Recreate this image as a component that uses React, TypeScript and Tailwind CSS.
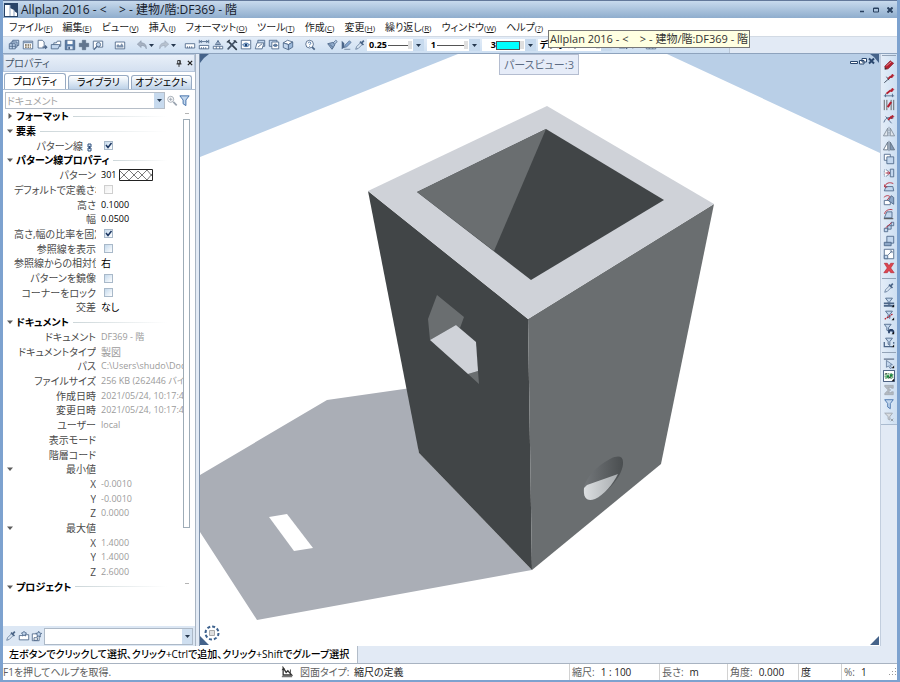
// src/App.tsx
import type { ReactNode } from "react";

const NAVY = "#4c6688";
const PALE = "#c3d7ee";
const RED = "#b5202f";

const redPencil = <path d="M8.5 5.5 11 2.500l1.500 1.500-2.500 3z" fill={RED} stroke={RED} />;
const funnel = <path d="M3 2.500h8L8 6.500V11L6 9.500v-3z" fill={PALE} stroke={NAVY} />;
const corner = <path d="M10 13h3v-3z" fill="#111" />;

// every drawing sits on a 14 x 14 grid
const icons: Record<string, ReactNode> = {
  project: (
    <g stroke={NAVY} fill={PALE}>
      <path d="M5.500 1.500h7v6h-7z" />
      <path d="M3.500 3.500h7v6h-7z" />
      <path d="M1.500 5.500h7v6h-7zM1.500 8.500h7M5 5.500v6" />
    </g>
  ),
  layout: (
    <g>
      <path d="M1.500 2.500h11v9h-11z" fill="#fff" stroke={NAVY} />
      <path d="M2 3h10v2H2z" fill="#8097b5" />
      <path d="M3.500 7h7M3.500 9.500h7" stroke="#6f6045" strokeWidth="1.500" strokeDasharray="2 1" />
    </g>
  ),
  newFile: (
    <g stroke={NAVY} fill="#fff">
      <path d="M2.500 1.500h5l2 2v7h-7z" />
      <path d="M7.500 9.500h5M10.500 7.500l2 2-2 2" fill="none" strokeWidth="1.500" />
    </g>
  ),
  open: (
    <g stroke={NAVY} fill={PALE}>
      <path d="M4.500 4.500h3l1-2h4v6h-8z" fill="#fff" />
      <path d="M1.500 6.500h8l2 0-2 5h-8z" />
    </g>
  ),
  save: (
    <g>
      <path d="M1.500 1.500h11v11h-11z" fill="#5b7da8" stroke={NAVY} />
      <path d="M4 2h6v4H4z" fill="#fff" />
      <path d="M4 8.500h6V12H4z" fill="#dce7f4" />
      <path d="M5 9h2v3H5z" fill={NAVY} />
    </g>
  ),
  plus: <path d="M5 1.500h4V5h3.500v4H9v3.500H5V9H1.500V5H5z" fill="#62758e" stroke="#52647b" strokeWidth=".6" />,
  preview: (
    <g stroke={NAVY} fill="#fff">
      <path d="M1.500 11.500v-9h11v7h-6" />
      <circle cx="7.500" cy="6.500" r="2.500" fill={PALE} />
      <path d="m6 8.500-4 4" strokeWidth="1.500" />
    </g>
  ),
  picture: (
    <g>
      <path d="M1.500 3.500h11v8h-11z" fill="#fff" stroke={NAVY} />
      <path d="M3 10V7l2-1 2 2 2-3 2 3v2z" fill="#7b91ad" />
    </g>
  ),
  undo: <path d="M6 2 1.500 6 6 10V7.500c3 0 5 1 6 4 .5-4-1.500-7-6-7z" fill="#a7b2c1" stroke="#8290a3" strokeWidth=".6" />,
  redo: <path d="m8 2 4.500 4L8 10V7.500c-3 0-5 1-6 4-.5-4 1.500-7 6-7z" fill="#b8c2cf" stroke="#94a1b2" strokeWidth=".6" />,
  ruler: (
    <g stroke={NAVY} fill="#fff">
      <path d="M1.500 5.500h11v5h-11z" />
      <path d="M4 8.500v2M6.500 8.500v2M9 8.500v2" />
    </g>
  ),
  measure: (
    <g stroke={NAVY} fill="#fff">
      <path d="M1.500 7.500h11v4h-11zM4 9.500v2M6.500 9.500v2M9 9.500v2" />
      <path d="M1.500 1v4M12.500 1v4M2 3h10M4.500 1.500 2.500 3l2 1.500M9.500 1.500l2 1.500-2 1.500" />
    </g>
  ),
  balance: (
    <g stroke={NAVY} fill="#fff">
      <path d="M7 1.500v5M4 6.500h6M7 2 4 6.500M7 2l3 4.500" />
      <path d="M1.500 8.500h11v3h-11zM5 8.500v3M9 8.500v3" />
    </g>
  ),
  tools: (
    <g strokeLinecap="round">
      <path d="m3 3 9 9" stroke="#33404f" strokeWidth="2" />
      <path d="M11 2.500 2.500 11.500" stroke="#46566b" strokeWidth="2" />
      <path d="M1.500 3.500 4 1.500M9.500 2l3 2" stroke="#33404f" strokeWidth="1.500" />
    </g>
  ),
  eye: (
    <g>
      <path d="M1.500 1.500h11v10h-11z" fill="#fff" stroke={NAVY} />
      <path d="M3 7c2-3 6-3 8 0-2 2.500-6 2.500-8 0z" fill={PALE} stroke="#31629b" />
      <circle cx="7" cy="7" r="1.500" fill="#1f416e" />
    </g>
  ),
  layers: (
    <g stroke={NAVY} fill="#fff">
      <path d="M4.500 1.500h8v7h-8z" fill={PALE} />
      <path d="m1.500 11.500 2-7h8l-2 7z" />
      <path d="m4.500 9.500 5-4" />
    </g>
  ),
  layersEye: (
    <g stroke={NAVY} fill="#fff">
      <path d="M1.500 1.500h9v7h-9z" fill={PALE} />
      <path d="M4.500 3.500h8v8h-8z" />
      <path d="M6 7.500c1.500-2 4-2 5 0-1 1.500-3.500 1.500-5 0z" fill="#5b7da8" />
    </g>
  ),
  cube: (
    <g stroke={NAVY}>
      <path d="m1.500 4.500 5-3 6 2-5 3z" fill="#fff" />
      <path d="m1.500 4.500 6 2v6l-6-2.500z" fill={PALE} />
      <path d="m7.500 6.500 5-3v6l-5 3z" fill="#9dbadb" />
    </g>
  ),
  help: (
    <g stroke={NAVY} fill="#fff">
      <circle cx="6.500" cy="6" r="4.500" />
      <path d="m9.500 9.500 3 3" strokeWidth="2" />
      <path d="M5 5c0-2 3-2 3 0 0 1-1.500 1-1.500 2M6.500 8v1" fill="none" stroke="#31629b" />
    </g>
  ),
  brush: (
    <g stroke={NAVY}>
      <path d="m8 5 3.500-3.500L13 3 9.500 6.500z" fill={PALE} />
      <path d="M2 5.500 8 4l2.500 2.500L7 12z" fill="#8fa9c9" />
      <path d="m4 6 4.500 4" />
    </g>
  ),
  fillPencil: (
    <g>
      <path d="M2 2v10l3-2V5z" fill={NAVY} />
      <path d="m5 10 1-3 5-5 2 2-5 5z" fill="#86a6cf" stroke={NAVY} strokeWidth=".8" />
      <path d="M5 12h7" stroke="#6c7f99" />
    </g>
  ),
  dropper: (
    <g stroke={NAVY}>
      <path d="m2 12 1-3 5-5 2 2-5 5z" fill="#dbe7f4" strokeWidth=".8" />
      <path d="m7 3 4 4M9 4.500 11.500 2" strokeWidth="2" />
    </g>
  ),
  pencil: (
    <g>
      <path d="M2 8.500 8.500 2l4 3L6 11.500l-3 .5z" fill={RED} stroke="#7b1d28" strokeWidth=".7" />
      <path d="m4 8 6-5" stroke="#ea9a9f" />
      <path d="M2 12.500 2 9.500l2.500 2z" fill="#333" />
    </g>
  ),
  trim: (
    <g>
      {redPencil}
      <path d="m1.500 12.500 8-7M4 5.500l3 4" stroke="#2c3a4d" />
      <path d="m6 8 3-3" stroke={RED} strokeWidth="2" />
    </g>
  ),
  trimEnd: (
    <g>
      {redPencil}
      <path d="M1 11.500h12M3 9v4M11 9v4" stroke={NAVY} />
      <path d="m4 9 5-4" stroke={RED} strokeWidth="2" />
    </g>
  ),
  between: (
    <g>
      <path d="M1.500 1v12M4.500 1v12M9.500 1v12M12.500 1v12" stroke="#555" />
      <path d="m5.500 9.500 4-6" stroke={RED} strokeWidth="2.500" />
    </g>
  ),
  trimCurve: (
    <g>
      {redPencil}
      <path d="M1 11c2-5 4-7 11-5M3 4l7 8" stroke={NAVY} fill="none" />
      <path d="m6 8 4-4" stroke={RED} strokeWidth="2" />
    </g>
  ),
  mirrorCopy: (
    <g stroke="#7f8b99">
      <path d="M5.500 2.500v9h-5zM8.500 2.500v9h5z" fill="#dfe5ec" />
      <path d="M7 1v12" strokeDasharray="2 1" />
    </g>
  ),
  mirror: (
    <g stroke="#5d6d80">
      <path d="M5.500 2.500v9h-5z" fill="#fff" />
      <path d="M8.500 2.500v9h5z" fill="#8298b3" />
      <path d="M7 1v12" />
    </g>
  ),
  copy: (
    <g stroke={NAVY}>
      <path d="M1.500 1.500h7v7h-7z" fill="#fff" />
      <path d="M4.500 4.500h8v8h-8z" fill={PALE} />
    </g>
  ),
  move: (
    <g stroke={NAVY}>
      <path d="M1.500 3.500h4v7h-4z" fill="#fff" strokeDasharray="1 1" />
      <path d="M8.500 2.500h4v9h-4z" fill={PALE} />
      <path d="M3 7h5M6 5l2 2-2 2" stroke={RED} fill="none" />
    </g>
  ),
  rotate: (
    <g>
      <path d="M3.500 6.500h8l1 5h-11z" fill={PALE} stroke={NAVY} />
      <path d="M2 7C3 2 8 1 12 3M2 4v3h3" stroke={RED} fill="none" />
    </g>
  ),
  rotateCopy: (
    <g>
      <path d="M1.500 7.500h7v5h-7z" fill="#fff" stroke={NAVY} />
      <path d="m6.500 8 3-6 3 2v8z" fill="#8da7c7" stroke={NAVY} />
      <path d="M1 4c2-2 5-3 7-1L5 7" stroke={RED} fill="none" />
    </g>
  ),
  rotate3d: (
    <g>
      <path d="M4.500 4.500h6v7h-9z" fill={PALE} stroke={NAVY} />
      <path d="M2 7c0-4 5-6 9-5" stroke={RED} fill="none" />
      <path d="M1 12.500h11" stroke="#333" />
    </g>
  ),
  array: (
    <g stroke={NAVY} fill={PALE}>
      <path d="M1.500 8.500h4v4h-4zM5.500 5.500h4v4h-4zM9.500 1.500h3v4h-3z" />
      <path d="m3 8 7-6" stroke={RED} />
    </g>
  ),
  stack: (
    <g stroke={NAVY}>
      <path d="M4.500 1.500h8v8h-8z" fill={PALE} />
      <path d="M1.500 8.500h8v4h-8z" fill="#8da7c7" />
    </g>
  ),
  stretch: (
    <g>
      <path d="M1.500 1.500h11v11h-11z" fill="#fff" stroke={NAVY} />
      <path d="M1.500 8.500h4v4h-4z" fill={PALE} stroke={NAVY} />
      <path d="m6 8 4-4M8 3.500h2.500V6" stroke={NAVY} fill="none" />
    </g>
  ),
  remove: <path d="M1.500 1.500H5l2 3 2-3h3.500L9 7l4 5.500H9L7 9.500l-2 3H1L5 7z" fill="#dc4750" stroke="#b5202f" strokeWidth=".7" />,
  filterLine: (
    <g>
      {funnel}
      <path d="M1 8.500h12M1 11.500h12" stroke={NAVY} strokeWidth="2" />
      {corner}
    </g>
  ),
  filterRed: (
    <g>
      {funnel}
      <path d="m2 12 9-6" stroke={RED} strokeWidth="1.500" strokeDasharray="2 1" />
      {corner}
    </g>
  ),
  filterFind: (
    <g>
      <path d="M1.500 1.500h8l-3 4v4l-2-1v-3z" fill={PALE} stroke={NAVY} />
      <path d="M6 12V9l2-2h3l2 2v3h-2v-2H8v2z" fill="#253e66" />
      {corner}
    </g>
  ),
  filterBox: (
    <g>
      {funnel}
      <path d="M1.500 7v5.500h9M12.500 7v2" stroke={NAVY} strokeWidth="1.500" fill="none" />
      {corner}
    </g>
  ),
  pick: (
    <g>
      <path d="M1 2.500h12" stroke="#8392a8" strokeWidth="2" />
      <path d="m4 4 7 5-3 .5 2 3-1.500 1-2-3L4 12z" fill={PALE} stroke={NAVY} strokeWidth=".8" />
      {corner}
    </g>
  ),
  green: (
    <g>
      <path d="M.5.500h13v13H.5z" fill="#fff" stroke="#253e66" />
      <path d="M2.500 4.500h9v5h-9z" fill="#dff1dc" stroke="#27733c" strokeDasharray="2 1" />
      <path d="M4 6h3v3H4zM8 5h3v3H8z" fill="#16833a" />
      <path d="M7 8h2v1H7zM3 4h2v1H3z" fill="#111" />
      {corner}
    </g>
  ),
  sigma: <path d="M2 1.500h10V5h-2V4H6l3 3-3 3h4V9h2v3.500H2V11l4-4-4-4z" fill="#b3b9c0" stroke="#949ba4" strokeWidth=".6" />,
  funnel: <path d="M2 2h10L8.500 6.500v6l-3-2v-4z" fill={PALE} stroke="#3f6da8" />,
  funnelGray: (
    <g>
      <path d="M2 2.500h9L8 6.500v4l-2-1v-3z" fill="#d8dce0" stroke="#9da4ad" />
      <path d="m9 9 3 3M12 9l-3 3" stroke="#8f979f" />
    </g>
  ),
  zoom: (
    <g stroke="#9aa4b0" fill="#fff">
      <circle cx="5.500" cy="5" r="3.500" />
      <path d="m8.500 8 4 4" strokeWidth="2" />
      <path d="M3.500 5h4M5.500 3v4" />
    </g>
  ),
  favOpen: (
    <g stroke={NAVY} fill="#fff">
      <path d="M1.500 6.500h3l1-1h7v6h-11z" />
      <path d="m7 1.500 1 1.500 2 .5-1.500 1.500.5 2-2-1-2 1 .5-2L4 3.500 6 3z" fill={PALE} />
    </g>
  ),
  favSave: (
    <g stroke={NAVY} fill="#fff">
      <path d="M1.500 4.500h8v8h-8zM3.500 9h4v3h-4z" />
      <path d="m9 1.500 1 2 2.500.5-2 1.500.5 2.500-2-1-2 1 .5-2.500-2-1.500L8 3.500z" fill={PALE} />
    </g>
  ),
  drawingType: (
    <g stroke="#333" fill="none">
      <path d="M2.500 2v8.500h10L8 5.500l-2 2z" strokeWidth="1.500" />
      <path d="M1 4.500 4 3M11 4v4M1 12.500h12" />
    </g>
  ),
};

function Icon({ name, className = "size-[14px]" }: { name: string; className?: string }) {
  return (
    <svg viewBox="0 0 14 14" className={className} fill="none" aria-hidden="true">
      {icons[name]}
    </svg>
  );
}

function Caret() {
  return (
    <svg viewBox="0 0 5 3" className="h-[3px] w-[5px] shrink-0" aria-hidden="true">
      <path d="M0 0h5L2.500 3z" fill="#26384f" />
    </svg>
  );
}

const menus = [
  ["ファイル", "F"],
  ["編集", "E"],
  ["ビュー", "V"],
  ["挿入", "I"],
  ["フォーマット", "O"],
  ["ツール", "T"],
  ["作成", "C"],
  ["変更", "H"],
  ["繰り返し", "R"],
  ["ウィンドウ", "W"],
  ["ヘルプ", "?"],
];

interface Row {
  kind?: "section" | "sub" | "check";
  label: string;
  value?: string;
  checked?: boolean;
  closed?: boolean;
  disabled?: boolean;
  editable?: boolean;
}

const rows: Row[] = [
  { kind: "section", label: "フォーマット", closed: true },
  { kind: "section", label: "要素" },
  { kind: "check", label: "パターン線", checked: true },
  { kind: "section", label: "パターン線プロパティ" },
  { label: "パターン", value: "301", editable: true },
  { kind: "check", label: "デフォルトで定義され", disabled: true },
  { label: "高さ", value: "0.1000", editable: true },
  { label: "幅", value: "0.0500", editable: true },
  { kind: "check", label: "高さ,幅の比率を固定", checked: true },
  { kind: "check", label: "参照線を表示" },
  { label: "参照線からの相対位", value: "右", editable: true },
  { kind: "check", label: "パターンを鏡像" },
  { kind: "check", label: "コーナーをロック" },
  { label: "交差", value: "なし", editable: true },
  { kind: "section", label: "ドキュメント" },
  { label: "ドキュメント", value: "DF369 - 階" },
  { label: "ドキュメントタイプ", value: "製図" },
  { label: "パス", value: "C:\\Users\\shudo\\Documents" },
  { label: "ファイルサイズ", value: "256 KB (262446 バイト)" },
  { label: "作成日時", value: "2021/05/24, 10:17:44" },
  { label: "変更日時", value: "2021/05/24, 10:17:44" },
  { label: "ユーザー", value: "local" },
  { label: "表示モード" },
  { label: "階層コード" },
  { kind: "sub", label: "最小値" },
  { label: "X", value: "-0.0010" },
  { label: "Y", value: "-0.0010" },
  { label: "Z", value: "0.0000" },
  { kind: "sub", label: "最大値" },
  { label: "X", value: "1.4000" },
  { label: "Y", value: "1.4000" },
  { label: "Z", value: "2.6000" },
  { kind: "section", label: "プロジェクト" },
];

function Triangle({ closed }: { closed?: boolean }) {
  return (
    <svg viewBox="0 0 6 6" className="size-[6px] shrink-0" aria-hidden="true">
      <path d={closed ? "M1.500 0v6L5 3z" : "M0 1.500h6L3 5z"} fill="#5c5c5c" />
    </svg>
  );
}

function PropertyRow({ row, id }: { row: Row; id: string }) {
  if (row.kind === "section") {
    return (
      <div className="flex min-h-0 flex-1 items-center">
        <button type="button" className="flex items-center gap-[3px] font-bold text-black">
          <Triangle closed={row.closed} />
          {row.label}
        </button>
        <span className="mr-4 ml-1 h-px flex-1 bg-linear-to-r from-[#ccd6d9] to-white" />
      </div>
    );
  }

  // figures and paths are set one size below Japanese values
  const valueSize = /^[\x20-\x7e]/.test(row.value ?? "") ? "text-[9px]" : "text-[10px]";

  return (
    <div className="flex min-h-0 flex-1 items-center">
      <span className="w-[7px] shrink-0">{row.kind === "sub" && <Triangle />}</span>
      <label htmlFor={id} className="w-[82px] shrink-0 overflow-hidden text-right whitespace-nowrap text-[#4a4a4a]">
        {row.label}
        {row.label === "パターン線" && (
          <svg viewBox="0 0 5 9" className="mx-1 inline h-[9px] w-[5px]" aria-hidden="true">
            <path d="M1 1h3v3H1zM1 5h3v3H1zM2.500 3v3" fill="#dbe7f4" stroke="#31527f" />
          </svg>
        )}
      </label>
      <div className="ml-[5px] flex min-w-0 flex-1 items-center overflow-hidden">
        {row.kind === "check" && (
          <span className="ml-[3px] grid size-[9px] place-items-center">
            <input
              id={id}
              type="checkbox"
              defaultChecked={row.checked}
              disabled={row.disabled}
              className="peer col-start-1 row-start-1 size-[9px] appearance-none border border-[#a9b9c9] bg-linear-to-br from-[#c4d9ec] to-white disabled:border-[#cfcfcf] disabled:from-[#eeeeee]"
            />
            <svg viewBox="0 0 9 9" className="pointer-events-none col-start-1 row-start-1 hidden size-[9px] peer-checked:block" aria-hidden="true">
              <path d="m2 4 2 2.500L7.500 2" stroke="#1b3560" strokeWidth="1.500" fill="none" />
            </svg>
          </span>
        )}
        {row.kind !== "check" && row.editable && (
          <input
            id={id}
            type="text"
            defaultValue={row.value}
            className={`h-[14px] text-black ${valueSize} ${row.value === "301" ? "w-[18px]" : "w-full"}`}
          />
        )}
        {row.kind !== "check" && !row.editable && (
          <output id={id} className={`whitespace-nowrap text-[#9b9b9b] ${valueSize}`}>
            {row.value}
          </output>
        )}
        {row.value === "301" && (
          <svg viewBox="0 0 34 12" className="h-[12px] w-[34px] shrink-0" aria-hidden="true">
            <path d="M.5.5h33v11H.5z" fill="#fff" stroke="#222" />
            <path d="M1 2l9 9 9-9 9 9 5-6M1 10l9-9 9 9 9-9 5 6" fill="none" stroke="#555" strokeWidth=".8" />
          </svg>
        )}
      </div>
    </div>
  );
}

function PropertyPanel() {
  return (
    <aside className="flex w-[193px] shrink-0 flex-col border-r border-[#a8b4c2] bg-white">
      <header className="flex h-[18px] items-center border border-[#b5c5da] bg-linear-to-b from-[#e9f0f9] to-[#d4e0f0] pl-px text-[10px] text-[#465568]">
        <span className="flex-1">プロパティ</span>
        <button type="button" aria-label="固定" className="mr-1">
          <svg viewBox="0 0 7 8" className="h-[7px] w-[6px]" aria-hidden="true">
            <path d="M2 .5h3v4H2zM.5 4.500h6M3.500 5v3M4.500 1v3" fill="none" stroke="#222" />
          </svg>
        </button>
        <button type="button" aria-label="閉じる">
          <svg viewBox="0 0 7 7" className="mx-px size-[6px]" aria-hidden="true">
            <path d="m1 1 5 5M6 1 1 6" stroke="#222" strokeWidth="1.500" />
          </svg>
        </button>
      </header>
      <div role="tablist" className="flex h-[18px] items-end gap-[2px] border-b border-[#aebfd3] pl-px text-[10px] leading-[13px] text-black">
        <button role="tab" aria-selected="true" type="button" className="h-[16px] w-[62px] rounded-t-[3px] border border-b-0 border-[#98abc3] bg-white">
          プロパティ
        </button>
        <button role="tab" type="button" className="h-[14px] w-[61px] rounded-t-[3px] border border-b-0 border-[#98abc3] bg-linear-to-b from-white to-[#bdd2e8]">
          ライブラリ
        </button>
        <button role="tab" type="button" className="h-[14px] w-[61px] rounded-t-[3px] border border-b-0 border-[#98abc3] bg-linear-to-b from-white to-[#bdd2e8]">
          オブジェクト
        </button>
      </div>
      <div className="mt-[2px] flex h-[17px] shrink-0 items-center px-[2px]">
        <label className="flex h-full w-[160px] items-center border border-[#b6bec8]">
          <select aria-label="ドキュメント" className="h-full min-w-0 flex-1 appearance-none px-px text-[10px] leading-[14px] text-[#a5a5a5]">
            <option>ドキュメント</option>
          </select>
          <span className="grid h-full w-[10px] place-items-center bg-[#c7daee]">
            <Caret />
          </span>
        </label>
        <button type="button" aria-label="拡大" className="ml-px">
          <Icon name="zoom" className="size-[12px]" />
        </button>
        <button type="button" aria-label="フィルタ">
          <Icon name="funnel" className="size-[13px]" />
        </button>
      </div>
      <div className="flex min-h-0 flex-1">
        <div className="flex min-w-0 flex-1 flex-col overflow-hidden pb-8 pl-1 text-[10px] leading-[14px]">
          {rows.map((row, i) => (
            <PropertyRow key={i} row={row} id={`prop-${i}`} />
          ))}
        </div>
        <div className="mr-[5px] flex w-[7px] flex-col items-center pt-[4px] pb-[42px]">
          <span className="h-px w-[4px] bg-[#b4b4b4]" />
          <span className="mt-[5px] w-full flex-1 border border-[#9eacb7] bg-white" />
          <span className="mt-[55px] h-px w-[4px] bg-[#b4b4b4]" />
        </div>
      </div>
      <footer className="flex h-[20px] shrink-0 items-center gap-px bg-[#dce7f4] px-[2px]">
        <button type="button" aria-label="プロパティを取得">
          <Icon name="dropper" className="size-[12px]" />
        </button>
        <button type="button" aria-label="お気に入りを開く">
          <Icon name="favOpen" className="size-[12px]" />
        </button>
        <button type="button" aria-label="お気に入りに保存">
          <Icon name="favSave" className="size-[12px]" />
        </button>
        <label className="flex h-[17px] flex-1 items-center border border-[#adb9c7] bg-white">
          <select aria-label="お気に入り" className="h-full min-w-0 flex-1 appearance-none" />
          <span className="grid h-full w-[10px] place-items-center bg-[#cfdff0]">
            <Caret />
          </span>
        </label>
      </footer>
    </aside>
  );
}

function ToolButton({ name }: { name: string }) {
  return (
    <button type="button" aria-label={name} className="grid w-[14px] place-items-center">
      <Icon name={name} className="size-[12px]" />
    </button>
  );
}

function Separator() {
  return <span className="h-[15px] w-px bg-[#b7c7da]" />;
}

function PenCombo({ label, value, className, children }: { label: string; value: string; className: string; children: ReactNode }) {
  return (
    <label className={`flex h-[12px] items-center bg-white ${className}`}>
      <select aria-label={label} className="h-full min-w-0 flex-1 appearance-none text-right text-[9px] leading-[12px] font-bold text-black">
        <option>{value}</option>
      </select>
      {children}
      <span className="h-[8px] w-[4px] bg-[#dfdfdf]" />
      <span className="ml-px grid h-full w-[11px] place-items-center bg-[#c7daee]">
        <Caret />
      </span>
    </label>
  );
}

function Toolbar() {
  return (
    <div className="flex h-[18px] shrink-0 items-center border-t border-b border-t-[#d2dae4] border-b-[#8ea3bd] bg-[#e2eaf5]">
      <div className="flex h-full w-[727px] items-center border-r border-[#b9c6d6] bg-linear-to-b from-[#e4edf8] to-[#cddff2] pl-1">
        {["project", "layout", "newFile", "open", "save", "plus", "preview"].map((name) => (
          <ToolButton key={name} name={name} />
        ))}
        <span className="mx-1">
          <Separator />
        </span>
        <ToolButton name="picture" />
        <span className="mx-1">
          <Separator />
        </span>
        <ToolButton name="undo" />
        <Caret />
        <span className="ml-[3px] flex items-center">
          <ToolButton name="redo" />
          <Caret />
        </span>
        <span className="mr-[3px] ml-1">
          <Separator />
        </span>
        {["ruler", "measure", "balance", "tools", "eye", "layers", "layersEye", "cube"].map((name) => (
          <ToolButton key={name} name={name} />
        ))}
        <span className="mx-1">
          <Separator />
        </span>
        <ToolButton name="help" />
        <span className="mr-[3px] ml-[5px]">
          <Separator />
        </span>
        {["brush", "fillPencil", "dropper"].map((name) => (
          <ToolButton key={name} name={name} />
        ))}
        <PenCombo label="ペンの太さ" value="0.25" className="w-[57px]">
          <span className="ml-px h-px w-[20px] bg-[#555555]" />
        </PenCombo>
        <PenCombo label="線種" value="1" className="ml-[3px] w-[53px]">
          <span className="ml-px h-px w-[27px] bg-[#555555]" />
        </PenCombo>
        <PenCombo label="線の色" value="3" className="ml-[2px] w-[54px]">
          <span className="h-[9px] w-[24px] border border-[#555555] bg-[#00ffff]" />
        </PenCombo>
        <PenCombo label="レイヤー" value="デフォルト" className="ml-[2px] w-[74px]">
          <span className="w-4" />
        </PenCombo>
        <span className="ml-1 flex">
          <ToolButton name="newFile" />
          <ToolButton name="redo" />
          <ToolButton name="balance" />
        </span>
      </div>
    </div>
  );
}

function Viewport() {
  return (
    <main className="relative ml-[3px] min-w-0 flex-1 overflow-hidden border-l border-[#7f93ac] bg-white">
      <svg viewBox="200 54 680 592" preserveAspectRatio="xMinYMin slice" className="block size-full" aria-hidden="true">
        <defs>
          <linearGradient id="pipeDark" x1="0" x2="1">
            <stop offset="0" stopColor="#73777a" />
            <stop offset="1" stopColor="#4a4e50" />
          </linearGradient>
          <linearGradient id="pipeLight" x1="0" x2="1">
            <stop offset="0" stopColor="#dcdfe1" />
            <stop offset="1" stopColor="#a9adb0" />
          </linearGradient>
        </defs>
        <path d="M200 54h258L200 157zM667 54h213v99z" fill="#b9cfe7" />
        <path d="m200 475 127-75 84-12 8 65 113 117-275 50-57-88z" fill="#aaaeb6" />
        <path d="m269 517 18-3 26 34-19 3z" fill="#fff" />
        <path d="m368 191 160 128 4 251-113-117z" fill="#414547" />
        <path d="m528 319 186-115-53 260-129 106z" fill="#6a6e70" />
        <path d="m547 106 167 98-186 115-160-128z" fill="#cfd2d8" />
        <path d="m546 129 118 71-133 80-114-88z" fill="#414547" />
        <path d="m417 192 129-63-52 122z" fill="#6a6e70" />
        <path d="m437 295-9 24 2 21 26-15 4 3 4-11zM468 374l10-3 1 13z" fill="#6a6e70" />
        <path d="m430 340 26-15 20 17 2 29-10 3z" fill="#cfd2d8" />
        <path d="M584 488c1-9 12-22 26-29 8-4 13-3 13 3 1 12-15 31-28 37-8 3-12-1-11-11z" fill="url(#pipeDark)" />
        <path d="M584 488l3-3 31-11c-5 10-14 21-23 25-8 3-12-1-11-11z" fill="url(#pipeLight)" />
        <path d="m200 54h9l-5 4-4 5zM879 54h-9l4 3 5 6zM200 645v-9l4 4 5 5zM879 645v-9l-4 4-5 5z" fill="#45638a" />
        <circle cx="212" cy="633" r="6.500" fill="#fff" stroke="#3e628e" strokeWidth="2" strokeDasharray="3 2" />
        <path d="M209.500 630.500h5v5h-5z" fill="#dedede" stroke="#aaa" />
      </svg>
      <div className="absolute top-0 left-[299px] h-[21px] border border-[#b4bdd0] bg-[#e6ecf8] px-1 text-[11px] leading-[19px] text-[#5d6c84]">
        パースビュー:3
      </div>
      <div className="absolute top-[3px] right-1 flex gap-px">
        <button type="button" aria-label="ビューを最小化">
          <svg viewBox="0 0 8 8" className="size-[8px]">
            <path d="M.5 4.500h7v2h-7z" fill="#fff" stroke="#29466d" />
          </svg>
        </button>
        <button type="button" aria-label="ビューを元に戻す">
          <svg viewBox="0 0 8 8" className="size-[8px]">
            <path d="M3 1.500h4.500V5H3zM.5 3.500H5V7H.5z" fill="#fff" stroke="#29466d" />
          </svg>
        </button>
        <button type="button" aria-label="ビューを閉じる">
          <svg viewBox="0 0 8 8" className="size-[8px]">
            <path d="m1 1.500 5 5M6 1.500l-5 5" stroke="#29466d" strokeWidth="2" />
          </svg>
        </button>
      </div>
    </main>
  );
}

const sideGroups = [
  ["pencil", "trim", "trimEnd", "between", "trimCurve", "mirrorCopy", "mirror", "copy", "move", "rotate", "rotateCopy", "rotate3d", "array", "stack", "stretch", "remove"],
  ["dropper", "filterLine", "filterRed", "filterFind", "filterBox"],
  ["pick", "green", "sigma", "funnel", "funnelGray"],
];

function SideToolbar() {
  return (
    <div className="w-[17px] shrink-0 border-l border-[#c2cede] bg-[#e2eaf5]">
      <div className="flex h-[371px] flex-col border-b border-[#aabbd0] bg-linear-to-r from-[#e4edf8] to-[#cddff2]">
        {sideGroups.map((group, i) => (
          <div key={i} className="contents">
            <span className={i === 0 ? "mx-px mt-px mb-[2px] h-px shrink-0 bg-[#93a3b7]" : "mx-px my-[3px] h-px shrink-0 bg-[#93a3b7]"} />
            {group.map((name) => (
              <button key={name} type="button" aria-label={name} className="grid min-h-0 flex-1 place-items-center">
                <Icon name={name} className="size-[12px]" />
              </button>
            ))}
          </div>
        ))}
      </div>
    </div>
  );
}

const statusCells = [
  { label: "縮尺:", value: "1 : 100", width: "w-[90px]" },
  { label: "長さ:", value: "m", width: "w-[68px]" },
  { label: "角度:", value: "0.000", width: "w-[71px]" },
  { label: "", value: "度", width: "w-[43px]" },
  { label: "%:", value: "1", width: "w-[48px]" },
];

const windowTitle = "Allplan 2016 - <    > - 建物/階:DF369 - 階";

export default function App() {
  return (
    <div className="relative flex h-screen flex-col overflow-hidden border-x-[3px] border-b-2 border-[#7da2cf] bg-[#e2eaf5] font-['Open_Sans','Noto_Sans_CJK_JP',sans-serif] [font-feature-settings:'palt']">
      <header className="flex h-[18px] shrink-0 items-center border-t border-[#63789a] bg-linear-to-b from-[#c8daed] to-[#8fadcd]">
        <svg viewBox="0 0 14 14" className="ml-px size-[14px]" aria-hidden="true">
          <path d="M0 0h14v14H0z" fill="#294468" />
          <path d="M1 2h5v11H1zM6 5l4 2v6H6zM10 8l3 2v3h-3z" fill="#fff" />
          <path d="M6 2v11M10 7v6" stroke="#91a7c4" />
        </svg>
        <h1 className="ml-[3px] flex-1 text-[12px] leading-[17px] whitespace-pre text-[#16202c]">{windowTitle}</h1>
        <div className="mr-1 flex items-center gap-[8px]">
          <button type="button" aria-label="最小化">
            <svg viewBox="0 0 6 6" className="size-[6px]">
              <path d="M1 4.500h4" stroke="#29405f" strokeWidth="1.500" />
            </svg>
          </button>
          <button type="button" aria-label="最大化">
            <svg viewBox="0 0 6 6" className="size-[6px]">
              <path d="M.5 1h5v4h-5zM.5 1.500h5" fill="none" stroke="#29405f" />
            </svg>
          </button>
          <button type="button" aria-label="閉じる">
            <svg viewBox="0 0 6 6" className="size-[6px]">
              <path d="m.5.5 5 5M5.500.5l-5 5" stroke="#29405f" strokeWidth="2" />
            </svg>
          </button>
        </div>
      </header>
      <nav className="flex h-[18px] shrink-0 items-center gap-[10px] bg-white pl-[6px] text-[10px] leading-[17px] text-[#1c1c1c]">
        {menus.map(([label, key]) => (
          <button key={key} type="button" className="whitespace-nowrap">
            {label}
            <span className="text-[8px]">
              (<u>{key}</u>)
            </span>
          </button>
        ))}
      </nav>
      <Toolbar />
      <div className="flex min-h-0 flex-1">
        <PropertyPanel />
        <Viewport />
        <SideToolbar />
      </div>
      <div className="flex h-[18px] shrink-0 border-b border-[#a8b3c1]">
        <p className="border-r border-[#b3bdc9] bg-white pr-[8px] pl-[6px] text-[10px] leading-[16px] font-medium text-black">
          左ボタンでクリックして選択、クリック+Ctrlで追加、クリック+Shiftでグループ選択
        </p>
      </div>
      <footer className="flex h-[16px] shrink-0 items-center bg-white text-[10px] leading-[16px] text-[#606060]">
        <span className="w-[278px]">F1を押してヘルプを取得.</span>
        <Icon name="drawingType" className="size-[12px]" />
        <span className="ml-[7px] flex-1">
          図面タイプ: <span className="ml-[2px] text-[#1c1c1c]">縮尺の定義</span>
        </span>
        {statusCells.map((cell) => (
          <span key={cell.value} className={`flex gap-[6px] border-l border-[#d2d2d2] pl-[2px] whitespace-nowrap ${cell.width}`}>
            {cell.label && <span>{cell.label}</span>}
            <span className="text-[#1c1c1c]">{cell.value}</span>
          </span>
        ))}
        <svg viewBox="0 0 8 8" className="size-[8px]" aria-hidden="true">
          <path d="M6 0h1v1H6zM3 3h1v1H3zM6 3h1v1H6zM0 6h1v1H0zM3 6h1v1H3zM6 6h1v1H6z" fill="#999" />
        </svg>
      </footer>
      <div role="tooltip" className="absolute top-[30px] left-[545px] h-[18px] border border-[#777777] bg-[#ffffe1] px-px text-[11px] leading-[15px] whitespace-pre text-[#333333]">
        {windowTitle}
      </div>
    </div>
  );
}
